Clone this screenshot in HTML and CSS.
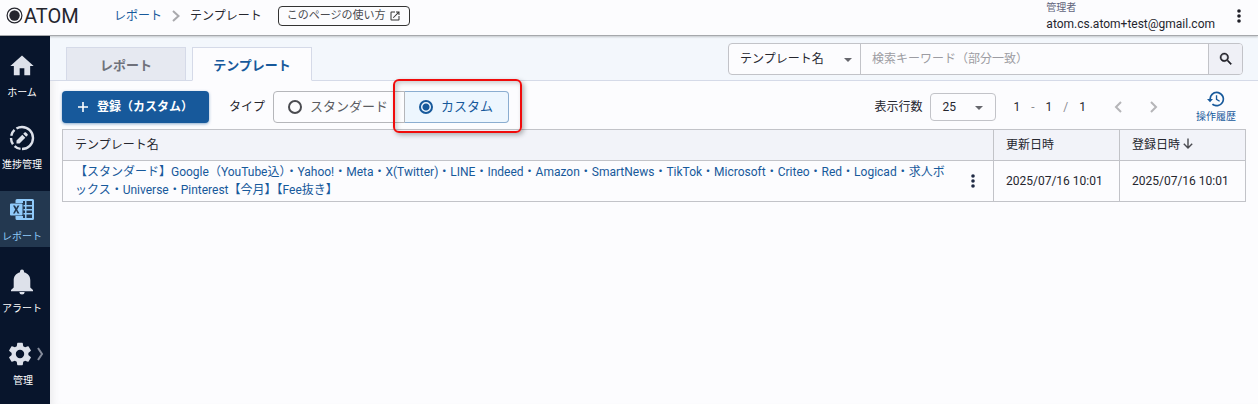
FILE: index.html
```html
<!DOCTYPE html>
<html lang="ja">
<head>
    <meta charset="UTF-8">
    <meta name="viewport" content="width=device-width, initial-scale=1.0">
    <title>ATOM テンプレート</title>
    <link rel="stylesheet" href="styles.css">
</head>
<body>
    <header class="header">
        <a class="logo" href="#">
            <svg width="17" height="17" viewBox="0 0 17 17">
                <circle cx="8.5" cy="8.5" r="7.4" fill="none" stroke="#25262e" stroke-width="1.2"/>
                <circle cx="8.5" cy="8.5" r="5.2" fill="#25262e"/>
            </svg>
            <span>ATOM</span>
        </a>
        <nav class="breadcrumb">
            <a href="#">レポート</a>
            <svg width="8" height="12" viewBox="0 0 8 12"><path d="M1 1l5.5 5L1 11" fill="none" stroke="#a9a9ad" stroke-width="2"/></svg>
            <span>テンプレート</span>
        </nav>
        <a class="help" href="#">
            このページの使い方
            <svg width="12" height="12" viewBox="0 0 24 24"><path fill="#333" d="M19 19H5V5h7V3H5a2 2 0 0 0-2 2v14a2 2 0 0 0 2 2h14c1.100 0 2-.9 2-2v-7h-2v7zM14 3v2h3.590l-9.830 9.830 1.410 1.410L19 6.410V10h2V3h-7z"/></svg>
        </a>
        <div class="account">
            <span class="role">管理者</span>
            <span class="email">atom.cs.atom+test@gmail.com</span>
        </div>
        <button class="icon-btn" type="button" aria-label="メニュー">
            <svg width="4" height="14" viewBox="0 0 4 14" fill="#1f1f27"><circle cx="2" cy="2" r="1.800"/><circle cx="2" cy="7" r="1.800"/><circle cx="2" cy="12" r="1.800"/></svg>
        </button>
    </header>

    <div class="layout">
        <nav class="sidebar">
            <a class="side-item" href="#">
                <svg width="28" height="28" viewBox="0 0 24 24"><path d="M10 20v-6h4v6h5v-8h3L12 3 2 12h3v8z"/></svg>
                <span>ホーム</span>
            </a>
            <a class="side-item" href="#">
                <svg width="28" height="28" viewBox="0 0 28 28">
                    <path d="M14 3a11 11 0 0 1 0 22" fill="none" stroke="#dde1ea" stroke-width="2.400"/>
                    <path d="M14 25A11 11 0 0 1 14 3" fill="none" stroke="#dde1ea" stroke-width="2.400" stroke-dasharray="6.600 2.400" stroke-dashoffset="-1.500"/>
                    <path d="M8.500 19.500v-3l5.800-5.800 3 3-5.800 5.800zM15.200 9.800l1.300-1.300c.5-.5 1-.5 1.500 0l1.500 1.500c.5.5.5 1 0 1.500l-1.300 1.300z"/>
                </svg>
                <span>進捗管理</span>
            </a>
            <a class="side-item active" href="#">
                <svg width="28" height="28" viewBox="0 0 28 28">
                    <path fill-rule="evenodd" d="M9 3h15.500a1.500 1.500 0 0 1 1.500 1.500v18a1.500 1.500 0 0 1-1.500 1.500H9a1.500 1.500 0 0 1-1.500-1.500V20H15v2h2v-3.500h-1.500V17H17v-2.500h-1.500V13H17v-2.500h-1.500V9H17V5h-2v2H7.500V4.500A1.500 1.500 0 0 1 9 3zM18.500 5v4H24V5zM18.500 10.500V13H24v-2.500zM18.500 14.500V17H24v-2.500zM18.500 18.500V22H24v-3.500z"/>
                    <path fill-rule="evenodd" d="M3 7.500h10.500a1 1 0 0 1 1 1v10a1 1 0 0 1-1 1H3a1 1 0 0 1-1-1v-10a1 1 0 0 1 1-1zM5 9.500l2.200 4L5 17.500h1.800l1.400-2.700 1.400 2.700h1.900l-2.300-4 2.200-4H9.600l-1.300 2.600L7 9.500z"/>
                </svg>
                <span>レポート</span>
            </a>
            <a class="side-item" href="#">
                <svg width="28" height="28" viewBox="0 0 28 28"><path d="M14 26.500a2.700 2.700 0 0 0 2.700-2.500h-5.400a2.700 2.700 0 0 0 2.700 2.500zM22.300 19.500v-7c0-4.100-2.200-7.200-6.300-8.200V3.500a2 2 0 0 0-4 0v.8c-4 1-6.300 4.100-6.300 8.200v7L3 22v1.300h22V22z"/></svg>
                <span>アラート</span>
            </a>
            <a class="side-item has-sub" href="#">
                <div class="side-icon">
                    <svg width="28" height="28" viewBox="0 0 24 24"><path d="M19.140 12.940c.04-.3.06-.61.06-.94s-.02-.64-.07-.94l2.030-1.580c.18-.14.23-.41.120-.61l-1.920-3.320c-.120-.22-.37-.29-.59-.22l-2.390.96c-.5-.38-1.030-.7-1.620-.94l-.36-2.540c-.04-.24-.24-.41-.48-.41h-3.840c-.24 0-.43.17-.47.41l-.36 2.540c-.59.24-1.130.57-1.620.94l-2.390-.96c-.22-.08-.47 0-.59.22L2.740 8.870c-.120.21-.08.47.120.61l2.030 1.580c-.05.3-.09.63-.09.94s.02.64.07.94l-2.030 1.580c-.18.14-.23.41-.120.61l1.920 3.320c.120.22.37.29.59.22l2.390-.96c.5.38 1.030.7 1.620.94l.36 2.540c.05.24.24.41.48.41h3.840c.24 0 .44-.17.47-.41l.36-2.540c.59-.24 1.130-.56 1.620-.94l2.390.96c.22.08.47 0 .59-.22l1.920-3.320c.120-.22.07-.47-.120-.61zM12 15.600A3.600 3.600 0 1 1 12 8.400a3.600 3.600 0 0 1 0 7.200z"/></svg>
                    <svg width="7" height="14" viewBox="0 0 7 14"><path d="M1 1l4 6-4 6" fill="none" stroke="#858c9c" stroke-width="2"/></svg>
                </div>
                <span>管理</span>
            </a>
        </nav>

        <main class="main">
            <div class="tabbar">
                <a class="tab" href="#">レポート</a>
                <a class="tab current" href="#">テンプレート</a>
                <form class="search">
                    <div class="select-wrap search-field">
                        <select aria-label="検索対象">
                            <option>テンプレート名</option>
                        </select>
                    </div>
                    <input type="text" aria-label="検索キーワード" placeholder="検索キーワード（部分一致）">
                    <button type="button" aria-label="検索">
                        <svg width="16" height="16" viewBox="0 0 24 24"><path fill="#1f1f27" d="M15.500 14h-.79l-.28-.27A6.470 6.470 0 0 0 16 9.500 6.500 6.500 0 1 0 9.500 16c1.610 0 3.090-.59 4.230-1.570l.27.28v.79l5 4.990L20.490 19zm-6 0a4.500 4.500 0 1 1 0-9 4.500 4.500 0 0 1 0 9z" stroke="#1f1f27" stroke-width=".6"/></svg>
                    </button>
                </form>
            </div>

            <div class="toolbar">
                <button class="btn-add" type="button">
                    <svg width="12" height="12" viewBox="0 0 12 12"><path d="M6 1v10M1 6h10" stroke="#fff" stroke-width="1.600"/></svg>
                    登録（カスタム）
                </button>
                <span class="type-label" id="type-label">タイプ</span>
                <div class="type-group" role="radiogroup" aria-labelledby="type-label">
                    <label class="type-option"><input type="radio" name="type">スタンダード</label>
                    <label class="type-option selected"><input type="radio" name="type" checked>カスタム</label>
                </div>

                <div class="pager">
                    <label for="rows">表示行数</label>
                    <div class="select-wrap rows">
                        <select id="rows">
                            <option>25</option>
                        </select>
                    </div>
                    <div class="range">
                        <span>1</span><span class="sep">-</span><span>1</span><span class="sep">/</span><span>1</span>
                    </div>
                    <button class="icon-btn" type="button" aria-label="前へ">
                        <svg width="8" height="12" viewBox="0 0 8 12"><path d="M7 1L2 6l5 5" fill="none" stroke="#b5b5b8" stroke-width="2"/></svg>
                    </button>
                    <button class="icon-btn" type="button" aria-label="次へ">
                        <svg width="8" height="12" viewBox="0 0 8 12"><path d="M1 1l5 5-5 5" fill="none" stroke="#b5b5b8" stroke-width="2"/></svg>
                    </button>
                    <button class="history" type="button">
                        <svg width="18" height="18" viewBox="0 0 24 24"><path fill="#17599b" d="M13 2a10 10 0 0 0-10 10H0l4 4.200L8 12H5.300A7.700 7.700 0 1 1 8 17.900l-1.600 1.700A10 10 0 1 0 13 2zm-1.200 5v6l4.600 2.700.9-1.500-3.700-2.200V7z"/></svg>
                        操作履歴
                    </button>
                </div>
            </div>

            <table class="list">
                <thead>
                    <tr>
                        <th>テンプレート名</th>
                        <th class="date">更新日時</th>
                        <th class="date">登録日時
                            <svg width="10" height="11" viewBox="0 0 10 11"><path d="M5 .5v9.500M.8 5.800L5 10l4.200-4.200" fill="none" stroke="#4a4a50" stroke-width="1.400"/></svg>
                        </th>
                    </tr>
                </thead>
                <tbody>
                    <tr>
                        <td>
                            <div class="name-cell">
                                <a href="#">【スタンダード】Google（YouTube込）・Yahoo!・Meta・X(Twitter)・LINE・Indeed・Amazon・SmartNews・TikTok・Microsoft・Criteo・Red・Logicad・求人ボックス・Universe・Pinterest【今月】【Fee抜き】</a>
                                <button class="icon-btn" type="button" aria-label="操作">
                                    <svg width="4" height="14" viewBox="0 0 4 14" fill="#1f2a44"><circle cx="2" cy="2" r="1.800"/><circle cx="2" cy="7" r="1.800"/><circle cx="2" cy="12" r="1.800"/></svg>
                                </button>
                            </div>
                        </td>
                        <td class="date">2025/07/16 10:01</td>
                        <td class="date">2025/07/16 10:01</td>
                    </tr>
                </tbody>
            </table>
        </main>
    </div>
</body>
</html>
```
FILE: styles.css
```css
* {
    box-sizing: border-box;
}

body {
    margin: 0;
    min-height: 100vh;
    display: flex;
    flex-direction: column;
    background-color: #fcfcfe;
    color: #25262e;
    font-family: Roboto, "Noto Sans CJK JP", sans-serif;
    font-size: 12px;
    line-height: 18px;
}

a {
    color: #17599b;
    text-decoration: none;
}

svg {
    display: block;
    flex: none;
}

button,
input,
select {
    font: inherit;
    color: inherit;
    margin: 0;
}

button {
    cursor: pointer;
}

.icon-btn {
    display: flex;
    align-items: center;
    justify-content: center;
    flex: none;
    width: 36px;
    height: 24px;
    padding: 0;
    border: none;
    background: none;
}

/* header */
.header {
    display: flex;
    align-items: center;
    height: 36px;
    padding: 0 1px 4px 6px;
    border-bottom: 1px solid #a6a8ac;
    box-shadow: 0 1px 2px rgba(0, 0, 0, 0.2);
    position: relative;
    z-index: 1;
}

.logo {
    display: flex;
    align-items: center;
    gap: 1px;
    width: 108px;
    color: #25262e;
    font-size: 20px;
}

.breadcrumb {
    display: flex;
    align-items: center;
    gap: 10px;
}

.help {
    display: flex;
    align-items: center;
    gap: 4px;
    height: 20px;
    margin-left: 16px;
    padding: 0 8px;
    border: 1px solid #333;
    border-radius: 4px;
    color: #4a4b50;
    font-size: 11px;
}

.account {
    display: flex;
    flex-direction: column;
    margin: 0 6px 0 auto;
    line-height: 16px;
}

.role {
    color: #62657c;
    font-size: 10px;
}

.email {
    font-size: 12px;
}

/* sidebar */
.layout {
    display: flex;
    flex: 1;
}

.sidebar {
    display: flex;
    flex-direction: column;
    gap: 16px;
    flex: none;
    width: 50px;
    padding-top: 11px;
    background-color: #08152c;
}

.side-item {
    display: flex;
    flex-direction: column;
    align-items: center;
    gap: 5px;
    height: 56px;
    padding: 5px 6px 0 0;
    color: #fff;
    fill: #dde1ea;
    font-size: 10px;
    line-height: 16px;
    white-space: nowrap;
}

.side-item.active {
    background-color: #233850;
    color: #90caf9;
    fill: #90caf9;
}

.side-item.has-sub {
    padding-right: 4px;
}

.side-icon {
    display: flex;
    align-items: center;
    gap: 3px;
    padding-left: 3px;
}

/* tabs and search */
.main {
    flex: 1;
    min-width: 0;
    box-shadow: inset 8px 0 8px -6px rgba(0, 0, 0, 0.08);
}

.tabbar {
    display: flex;
    align-items: flex-end;
    gap: 6px;
    height: 45px;
    padding: 0 15px 0 16px;
    border-bottom: 1px solid #d5dae8;
    background-color: #f3f7fc;
}

.tab {
    display: flex;
    align-items: center;
    justify-content: center;
    width: 120px;
    height: 34px;
    padding-top: 3px;
    border: 1px solid #d5dae8;
    background-color: #e6e9f1;
    color: #6f717b;
    font-size: 13px;
    font-weight: bold;
    margin-bottom: -1px;
}

.tab.current {
    border-bottom-color: #fcfcfe;
    background-color: #fcfcfe;
    color: #17599b;
}

.search {
    display: flex;
    align-self: flex-end;
    flex: 0 1 515px;
    height: 32px;
    margin: 0 0 5px auto;
    border: 1px solid #c2c3c8;
    border-radius: 4px;
    background-color: #fcfcfe;
    overflow: hidden;
}

.search input {
    flex: 1;
    min-width: 0;
    padding: 0 11px;
    border: none;
    background: none;
}

.search input::placeholder {
    color: #9c9ca2;
}

.search button {
    display: flex;
    align-items: center;
    justify-content: center;
    width: 34px;
    padding: 0;
    border: none;
    border-left: 1px solid #c2c3c8;
    background-color: #eff0f6;
}

.select-wrap {
    display: flex;
    position: relative;
}

.select-wrap select {
    appearance: none;
    width: 100%;
    padding: 0 11px;
    border: none;
    background: none;
}

/* drop-down arrow */
.select-wrap::after {
    content: "";
    position: absolute;
    right: 8px;
    top: calc(50% - 1px);
    border: 4px solid transparent;
    border-top-color: #66676d;
    border-bottom: none;
    pointer-events: none;
}

.search-field {
    width: 132px;
    border-right: 1px solid #c2c3c8;
}

.rows::after {
    right: 12px;
}

/* toolbar */
.toolbar {
    display: flex;
    align-items: center;
    height: 48px;
    padding: 4px 12px 0;
}

.btn-add {
    display: flex;
    align-items: center;
    gap: 8px;
    height: 32px;
    padding: 0 16px 0 15px;
    border: none;
    border-radius: 4px;
    background-color: #17599b;
    box-shadow: 0 1px 3px rgba(23, 89, 155, 0.5);
    color: #fff;
    font-weight: bold;
}

.type-label {
    margin: 0 8px 0 20px;
}

.type-group {
    display: flex;
    height: 32px;
}

.type-option {
    display: flex;
    align-items: center;
    gap: 8px;
    width: 132px;
    padding-left: 14px;
    border: 1px solid #b5b6ba;
    border-radius: 4px 0 0 4px;
    color: #5b5c62;
    font-size: 13px;
    white-space: nowrap;
}

.type-option input {
    appearance: none;
    width: 14px;
    height: 14px;
    border: 2px solid #4a4b50;
    border-radius: 50%;
}

.type-option.selected {
    position: relative;
    width: 105px;
    margin-left: -1px;
    border-color: #8badd0;
    border-left-color: #b5b6ba;
    border-radius: 0 4px 4px 0;
    background-color: #edf6fe;
    color: #17599b;
}

.type-option.selected input {
    border-color: #17599b;
    background: radial-gradient(circle, #17599b 3px, transparent 4px);
}

/* red frame around the selected type */
.type-option.selected::after {
    content: "";
    position: absolute;
    inset: -13px -14px -11px -12px;
    border: 2px solid #f00b0b;
    border-radius: 6px;
    box-shadow: 2px 2px 5px rgba(0, 0, 0, 0.3), inset 2px 2px 5px rgba(0, 0, 0, 0.2);
    pointer-events: none;
}

.pager {
    display: flex;
    align-items: center;
    margin-left: auto;
}

.rows {
    width: 66px;
    height: 28px;
    margin: 0 17px 0 8px;
    border: 1px solid #c2c3c8;
    border-radius: 4px;
}

.range {
    display: flex;
    gap: 11px;
    margin-right: 14px;
}

.sep {
    color: #8c8d92;
}

.history {
    display: flex;
    flex-direction: column;
    align-items: center;
    margin-left: 18px;
    padding: 2px 10px 0 6px;
    border: none;
    background: none;
    color: #17599b;
    font-size: 10px;
}

/* template list */
.list {
    width: calc(100% - 24px);
    margin: 0 12px;
    border-collapse: collapse;
    table-layout: fixed;
}

.list th,
.list td {
    padding: 0 12px;
    border: 1px solid #c2c3c8;
    text-align: left;
    font-weight: normal;
}

.list th {
    height: 31px;
    background-color: #f2f3f9;
}

.list th svg {
    display: inline-block;
}

.list td {
    height: 41px;
}

.list .date {
    width: 126px;
    white-space: nowrap;
}

.name-cell {
    display: flex;
    align-items: center;
    justify-content: space-between;
    gap: 20px;
}

.name-cell .icon-btn {
    width: 16px;
}
```
